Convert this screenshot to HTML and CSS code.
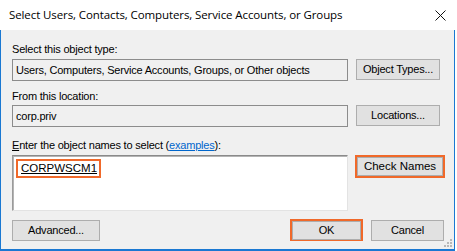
FILE: index.html
```html
<!DOCTYPE html>
<html>
<head>
<meta charset="utf-8">
<link rel="stylesheet" href="styles.css">
</head>
<body>
<div class="window">
  <div class="titlebar">
    <span class="title">Select Users, Contacts, Computers, Service Accounts, or Groups</span>
    <svg class="close" width="11" height="11" viewBox="0 0 11 11"><path d="M0.5 0.5 L10.5 10.5 M10.5 0.5 L0.5 10.5" stroke="#111" stroke-width="1" fill="none"/></svg>
  </div>
  <div class="body">
    <div class="label l1">Select this object type:</div>
    <div class="row">
      <div class="field ro">Users, Computers, Service Accounts, Groups, or Other objects</div>
      <div class="btn side">Object Types...</div>
    </div>
    <div class="label l2">From this location:</div>
    <div class="row">
      <div class="field ro">corp.priv</div>
      <div class="btn side">Locations...</div>
    </div>
    <div class="label l3"><u>E</u>nter the object names to select (<a class="link">examples</a>):</div>
    <div class="row">
      <div class="field big"><span class="hl">CORPWSCM1</span></div>
      <div class="hlwrap check"><div class="btn">Check Names</div></div>
    </div>
    <div class="footer">
      <div class="btn adv">Advanced...</div>
      <div class="spacer"></div>
      <div class="hlwrap ok"><div class="btn">OK</div></div>
      <div class="btn cancel">Cancel</div>
    </div>
    <svg class="grip" width="9" height="9" viewBox="0 0 9 9">
      <rect x="6" y="0" width="2" height="2" fill="#b8b8b8"/>
      <rect x="3" y="3" width="2" height="2" fill="#b8b8b8"/>
      <rect x="6" y="3" width="2" height="2" fill="#b8b8b8"/>
      <rect x="0" y="6" width="2" height="2" fill="#b8b8b8"/>
      <rect x="3" y="6" width="2" height="2" fill="#b8b8b8"/>
      <rect x="6" y="6" width="2" height="2" fill="#b8b8b8"/>
    </svg>
  </div>
</div>
</body>
</html>
```
FILE: styles.css
```css
* { box-sizing: border-box; }
html, body { margin: 0; padding: 0; }
body {
  width: 457px;
  height: 251px;
  overflow: hidden;
  background: #ffffff;
  font-family: "Liberation Sans", Arial, sans-serif;
  font-size: 11px;
  letter-spacing: -0.2px;
  color: #000;
}
.window {
  width: 457px;
  height: 251px;
  display: flex;
  flex-direction: column;
}
.titlebar {
  height: 30px;
  flex: none;
  background: #fff;
  display: flex;
  align-items: center;
  padding-left: 9px;
  padding-right: 11px;
}
.title {
  font-family: "Open Sans", "Noto Sans", sans-serif;
  font-size: 11.5px;
  letter-spacing: -0.1px;
  color: #000;
  flex: 1;
  padding-bottom: 1px;
}
.close { flex: none; }
.body {
  position: relative;
  flex: 1;
  background: #f0f0f0;
  border-left: 1px solid #1a78d2;
  border-right: 1px solid #1a78d2;
  border-bottom: 2px solid #1a78d2;
  margin-right: 2px;
  padding: 0 0 0 11px;
  display: flex;
  flex-direction: column;
}
.label {
  height: 14px;
  line-height: 14px;
  white-space: nowrap;
}
.l1 { margin-top: 12px; margin-bottom: 3px; }
.l2 { margin-top: 8px; margin-bottom: 2px; }
.l3 { margin-top: 11px; margin-bottom: 3px; }
.link { color: #0066cc; text-decoration: underline; }
.row {
  display: flex;
  align-items: flex-start;
}
.field {
  width: 336px;
  flex: none;
  border: 1px solid #8c8c8c;
  white-space: nowrap;
}
.ro {
  height: 22px;
  line-height: 20px;
  padding-left: 3px;
  background: #f0f0f0;
}
.big {
  height: 56px;
  background: #fff;
  border-top: 1px solid #8a8a8a;
  border-left: 1px solid #9a9a9a;
  border-right: 1px solid #e3e3e3;
  border-bottom: 1px solid #e3e3e3;
  box-shadow: inset 1px 1px 0 #b4b4b4;
  padding: 3px 0 0 3px;
}
.hl {
  display: inline-block;
  border: 2px solid #f0692a;
  height: 19px;
  line-height: 15px;
  padding: 0 2px 0 3px;
  text-decoration: underline;
  font-size: 11.5px;
  letter-spacing: 0;
}
.btn {
  height: 21px;
  line-height: 19px;
  background: #e1e1e1;
  border: 1px solid #adadad;
  text-align: center;
  white-space: nowrap;
}
.side { width: 84px; margin-left: 8px; }
.hlwrap {
  border: 2px solid #f0692a;
  flex: none;
}
.hlwrap .btn { height: 19px; line-height: 17px; }
.check { width: 90px; height: 23px; margin-left: 7px; }
.check .btn { font-size: 11.5px; letter-spacing: 0; }
.footer {
  display: flex;
  align-items: flex-start;
  margin-top: 9px;
  padding-right: 10px;
}
.adv { width: 88px; }
.spacer { flex: 1; }
.ok { width: 73px; height: 22px; margin-top: -1px; }
.cancel { width: 73px; margin-left: 8px; }
.grip {
  position: absolute;
  right: 1px;
  bottom: 1px;
}
```
